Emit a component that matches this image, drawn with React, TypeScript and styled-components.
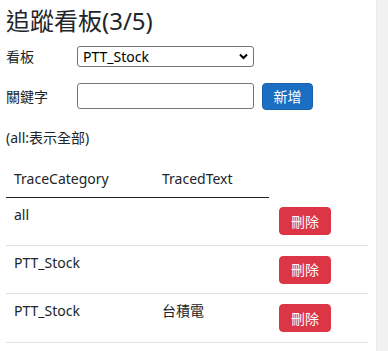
import styled, { createGlobalStyle } from 'styled-components';

const GlobalStyle = createGlobalStyle`
  html, body {
    margin: 0;
    padding: 0;
    background: #ffffff;
  }
  body {
    font-family: "Noto Sans", "Noto Sans CJK TC", sans-serif;
    font-size: 14px;
    line-height: 1.5;
    color: #212529;
  }
`;

const Page = styled.div`
  display: flex;
  min-height: 351px;
`;

const Main = styled.main`
  flex: 1;
  padding: 7px 6px 0 6px;
`;

const ScrollTrack = styled.div`
  width: 11px;
  background: #f1f1f1;
  border-left: 1px solid #e9e9e9;
`;

const Title = styled.h3`
  margin: 0 0 10px 0;
  font-size: 24px;
  font-weight: 400;
  line-height: 1.2;
`;

const FormRow = styled.div<{ $gap: number }>`
  display: flex;
  align-items: center;
  margin-bottom: ${(p) => p.$gap}px;
`;

const Label = styled.label`
  width: 71px;
  flex-shrink: 0;
`;

const SelectWrap = styled.div`
  position: relative;
  width: 177px;
`;

const Select = styled.select`
  appearance: none;
  width: 100%;
  height: 21px;
  box-sizing: border-box;
  border: 1px solid #767676;
  border-radius: 3px;
  background: #fff;
  padding: 0 20px 0 5px;
  font: inherit;
  font-size: 14px;
  line-height: 19px;
  color: #000;
`;

const Chevron = styled.svg`
  position: absolute;
  right: 6px;
  top: 7px;
  pointer-events: none;
`;

const TextInput = styled.input`
  width: 177px;
  height: 26px;
  box-sizing: border-box;
  border: 1px solid #767676;
  border-radius: 3px;
  padding: 0 4px;
  font: inherit;
`;

const Button = styled.button<{ $variant: 'primary' | 'danger' }>`
  display: inline-flex;
  align-items: center;
  justify-content: center;
  height: ${(p) => (p.$variant === 'primary' ? 27 : 28)}px;
  width: ${(p) => (p.$variant === 'primary' ? 51 : 52)}px;
  margin-left: ${(p) => (p.$variant === 'primary' ? 8 : 0)}px;
  box-sizing: border-box;
  padding: 0;
  border-radius: 4px;
  font: inherit;
  font-size: 14px;
  color: #fff;
  background: ${(p) => (p.$variant === 'primary' ? '#1b6ec2' : '#dc3545')};
  border: 1px solid ${(p) => (p.$variant === 'primary' ? '#1861ac' : '#dc3545')};
  cursor: pointer;
`;

const Note = styled.div`
  margin: 0 0 12px 0;
`;

const Table = styled.table`
  border-collapse: collapse;
  width: 362px;
  table-layout: fixed;
`;

const HeadCell = styled.th`
  text-align: left;
  font-weight: 400;
  padding: 8px;
  border-bottom: 1px solid #212529;
`;

const Cell = styled.td`
  padding: 6px 8px 8px 8px;
  vertical-align: top;
  border-bottom: 1px solid #dee2e6;
`;

const ActionCell = styled.td`
  padding: 10px 8px 9.5px 10px;
  vertical-align: top;
  border-bottom: 1px solid #dee2e6;
`;

const traces = [
  { category: 'all', text: '' },
  { category: 'PTT_Stock', text: '' },
  { category: 'PTT_Stock', text: '台積電' },
];

export default function App() {
  return (
    <>
      <GlobalStyle />
      <Page>
        <Main>
          <Title>追蹤看板(3/5)</Title>
          <FormRow $gap={16}>
            <Label>看板</Label>
            <SelectWrap>
              <Select defaultValue="PTT_Stock">
                <option>PTT_Stock</option>
                <option>Gossiping</option>
              </Select>
              <Chevron width="9" height="7" viewBox="0 0 9 7">
                <path d="M1 1.5 L4.5 5 L8 1.5" fill="none" stroke="#000" strokeWidth="2" />
              </Chevron>
            </SelectWrap>
          </FormRow>
          <FormRow $gap={17}>
            <Label>關鍵字</Label>
            <TextInput type="text" />
            <Button $variant="primary">新增</Button>
          </FormRow>
          <Note>(all:表示全部)</Note>
          <Table>
            <colgroup>
              <col style={{ width: 148 }} />
              <col style={{ width: 115 }} />
              <col style={{ width: 99 }} />
            </colgroup>
            <thead>
              <tr>
                <HeadCell>TraceCategory</HeadCell>
                <HeadCell>TracedText</HeadCell>
              </tr>
            </thead>
            <tbody>
              {traces.map((t, i) => (
                <tr key={i}>
                  <Cell>{t.category}</Cell>
                  <Cell>{t.text}</Cell>
                  <ActionCell>
                    <Button $variant="danger">刪除</Button>
                  </ActionCell>
                </tr>
              ))}
            </tbody>
          </Table>
        </Main>
        <ScrollTrack />
      </Page>
    </>
  );
}
